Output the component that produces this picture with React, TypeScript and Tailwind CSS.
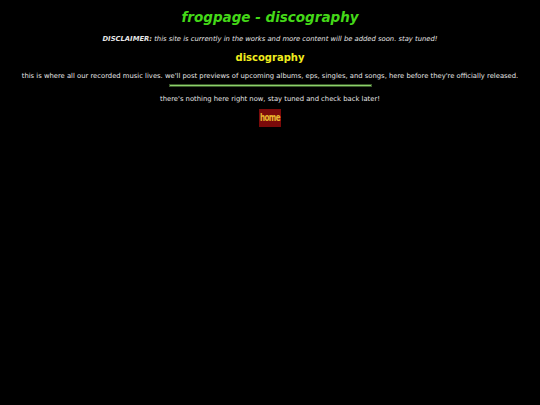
export default function App() {
  return (
    <div className="min-h-[405px] w-full bg-black text-center text-[#e6e6e6] antialiased [font-family:'DejaVu_Sans',Verdana,sans-serif]">
      <div className="pt-[9px]">
        <h1 className="text-[13.5px] font-bold italic leading-[17px] text-[#44d818]">frogpage - discography</h1>
        <p className="mt-[9px] text-[6.8px] italic leading-[9px]">
          <b>DISCLAIMER:</b> this site is currently in the works and more content will be added soon. stay tuned!
        </p>
        <h2 className="mt-[7px] text-[10px] font-bold leading-[13px] text-[#f0ec1e]">discography</h2>
        <p className="mt-[8px] text-[6.8px] leading-[9px]">
          this is where all our recorded music lives. we'll post previews of upcoming albums, eps, singles, and songs, here before they're officially released.
        </p>
        <div className="mx-auto mt-[3px] h-[3px] w-[203px] border border-[#3a5a2a] bg-[#8cd06a]" />
        <p className="mt-[8px] text-[6.8px] leading-[9px]">there's nothing here right now, stay tuned and check back later!</p>
        <div className="mx-auto mt-[5px] flex h-[18px] w-[22px] items-center justify-center bg-[#7a0a0a]">
          <span className="scale-y-125 text-[8px] leading-none font-bold tracking-[-0.6px] text-[#e8b830] [font-family:'DejaVu_Sans_Condensed','Liberation_Sans_Narrow',sans-serif]">home</span>
        </div>
      </div>
    </div>
  );
}
